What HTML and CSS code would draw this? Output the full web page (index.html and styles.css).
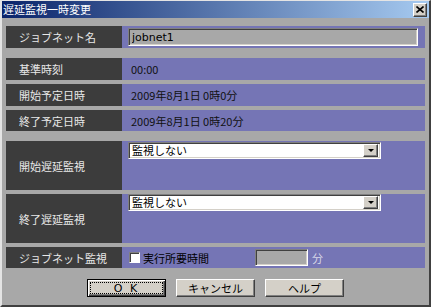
FILE: index.html
```html
<!DOCTYPE html>
<html>
<head>
<meta charset="utf-8">
<link rel="stylesheet" href="styles.css">
</head>
<body>

<div class="window">
	<div class="titlebar">
		<span class="title">遅延監視一時変更</span>
		<div class="close">
			<svg width="8" height="7" viewBox="0 0 8 7"><path d="M0.5 0.5 L7.5 6.5 M7.5 0.5 L0.5 6.5" stroke="#000" stroke-width="1.6"/></svg>
		</div>
	</div>

	<div class="content">
		<div class="row first">
			<div class="label">ジョブネット名</div>
			<div class="value">
				<input type="text" class="field name" value="jobnet1">
			</div>
		</div>

		<div class="row sep">
			<div class="label">基準時刻</div>
			<div class="value text">00:00</div>
		</div>
		<div class="row">
			<div class="label">開始予定日時</div>
			<div class="value text">2009年8月1日 0時0分</div>
		</div>
		<div class="row short">
			<div class="label">終了予定日時</div>
			<div class="value text">2009年8月1日 0時20分</div>
		</div>

		<div class="row sep tall">
			<div class="label">開始遅延監視</div>
			<div class="value top">
				<div class="combo first-combo">
					<span class="combo-text">監視しない</span>
					<div class="drop"><span class="arrow"></span></div>
				</div>
			</div>
		</div>
		<div class="row tall">
			<div class="label">終了遅延監視</div>
			<div class="value top">
				<div class="combo">
					<span class="combo-text">監視しない</span>
					<div class="drop"><span class="arrow"></span></div>
				</div>
			</div>
		</div>

		<div class="row short">
			<div class="label">ジョブネット監視</div>
			<div class="value">
				<label class="check">
					<span class="box"></span>
					<span>実行所要時間</span>
				</label>
				<input type="text" class="field minutes" value="">
				<span class="unit">分</span>
			</div>
		</div>

		<div class="buttons">
			<div class="btn default"><span class="focus">O K</span></div>
			<div class="btn">キャンセル</div>
			<div class="btn">ヘルプ</div>
		</div>
	</div>
</div>

</body>
</html>
```

FILE: styles.css
```css
body {
	margin: 0;
	font-family: "Noto Sans CJK JP", sans-serif;
	font-size: 11px;
}

.window {
	width: 431px;
	height: 307px;
	box-sizing: border-box;
	background: #a8a8a8;
	border-style: solid;
	border-width: 1px 2px 2px 2px;
	border-color: #e4e4e4 #404040 #404040 #e4e4e4;
	display: flex;
	flex-direction: column;
}

.titlebar {
	height: 17px;
	background: linear-gradient(90deg, #0a246a, #a6caf0);
	color: #ffffff;
	display: flex;
	align-items: center;
	justify-content: space-between;
	padding: 0 2px 0 1px;
}

.title {
	font-size: 11px;
	line-height: 17px;
}

.close {
	width: 14px;
	height: 14px;
	box-sizing: border-box;
	background: #d4d0c8;
	border: 1px solid;
	border-color: #ffffff #404040 #404040 #ffffff;
	box-shadow: inset -1px -1px #808080;
	display: flex;
	align-items: center;
	justify-content: center;
}

.content {
	padding: 8px 4px 0;
	display: flex;
	flex-direction: column;
}

.row {
	display: flex;
	height: 22px;
	margin-top: 4px;
}

.row.first {
	margin-top: 0;
}

.row.sep {
	margin-top: 10px;
}

.row.short {
	height: 21px;
}

.row.tall {
	height: 49px;
}

.label {
	width: 116px;
	box-sizing: border-box;
	background: #3c3c3c;
	color: #e8e8e8;
	padding-left: 13px;
	display: flex;
	align-items: center;
}

.value {
	flex: 1;
	background: #7575b5;
	display: flex;
	align-items: center;
	padding-left: 6px;
	color: #111111;
}

.value.text {
	padding-left: 9px;
}

.value.top {
	align-items: flex-start;
}

/* sunken edit boxes */
.field {
	box-sizing: border-box;
	height: 18px;
	margin: 0;
	padding: 0 3px;
	background: #a8a8a8;
	border: 1px solid;
	border-color: #808080 #ffffff #ffffff #808080;
	box-shadow: inset 1px 1px #404040, inset -1px -1px #d4d0c8;
	font-family: "DejaVu Sans", sans-serif;
	font-size: 11px;
	color: #000000;
	outline: none;
}

.field.name {
	width: 290px;
}

.field.minutes {
	width: 53px;
	height: 17px;
	margin-left: 46px;
}

.unit {
	margin-left: 4px;
	color: #d8d8e8;
}

/* combo boxes */
.combo {
	width: 253px;
	height: 17px;
	box-sizing: border-box;
	background: #ffffff;
	border: 1px solid;
	border-color: #808080 #ffffff #ffffff #808080;
	box-shadow: inset 1px 1px #404040, inset -1px -1px #d4d0c8;
	display: flex;
	align-items: center;
	justify-content: space-between;
	padding: 2px;
}

.combo.first-combo {
	margin-top: 1px;
}

.combo-text {
	padding-left: 1px;
	line-height: 13px;
	color: #000000;
}

.drop {
	width: 15px;
	height: 13px;
	box-sizing: border-box;
	background: #d4d0c8;
	border: 1px solid;
	border-color: #ffffff #404040 #404040 #ffffff;
	box-shadow: inset -1px -1px #808080;
	display: flex;
	align-items: center;
	justify-content: center;
}

.arrow {
	width: 0;
	height: 0;
	border-left: 3px solid transparent;
	border-right: 3px solid transparent;
	border-top: 3px solid #000000;
}

/* checkbox */
.check {
	display: flex;
	align-items: center;
	margin-left: 1px;
	color: #000000;
}

.box {
	width: 11px;
	height: 11px;
	box-sizing: border-box;
	background: #ffffff;
	border: 1px solid;
	border-color: #808080 #ffffff #ffffff #808080;
	box-shadow: inset 1px 1px #404040;
	margin-right: 3px;
}

/* push buttons */
.buttons {
	display: flex;
	justify-content: center;
	gap: 10px;
	margin-top: 11px;
}

.btn {
	width: 79px;
	height: 18px;
	box-sizing: border-box;
	background: #d4d0c8;
	border: 1px solid;
	border-color: #ffffff #404040 #404040 #ffffff;
	box-shadow: inset -1px -1px #808080;
	display: flex;
	align-items: center;
	justify-content: center;
	font-size: 11px;
	color: #000000;
}

.btn.default {
	border: 1px solid #000000;
	box-shadow: inset 1px 1px #ffffff, inset -1px -1px #404040, inset -2px -2px #808080;
	padding: 2px;
}

.focus {
	flex: 1;
	align-self: stretch;
	border: 1px dotted #000000;
	display: flex;
	align-items: center;
	justify-content: center;
	font-family: "DejaVu Sans", sans-serif;
	font-size: 11px;
	letter-spacing: 2px;
}
```
